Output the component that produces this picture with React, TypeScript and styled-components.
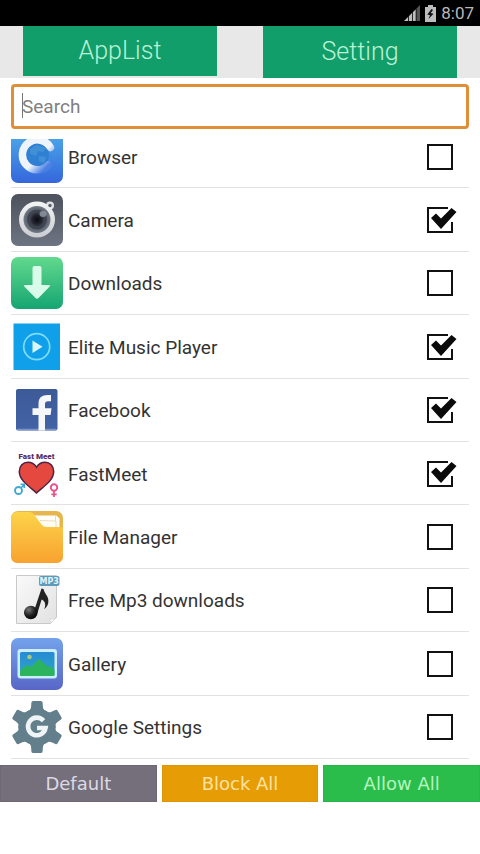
import React, { useState } from "react";
import styled, { createGlobalStyle } from "styled-components";

const GlobalStyle = createGlobalStyle`
  * { box-sizing: border-box; }
  body { margin: 0; background: #fff; font-family: Roboto, "Noto Sans", sans-serif; color: #333; }
  button, input { font: inherit; }
`;

const Screen = styled.div`
  display: flex;
  flex-direction: column;
  min-height: 100vh;
`;

const StatusBar = styled.header`
  display: flex;
  align-items: center;
  justify-content: flex-end;
  gap: 5px;
  height: 26px;
  padding: 0 6px 0 0;
  background: #000;
  color: #b9b9b9;
  font-size: 17px;
`;

const Tabs = styled.nav`
  display: grid;
  grid-template-columns: 1fr 1fr;
  height: 52px;
  background: #e8e8e8;
`;

const Tab = styled.button<{ $selected: boolean }>`
  margin: 0 23px ${(p) => (p.$selected ? 2 : 0)}px;
  padding: 0;
  border: 0;
  background: #129e6b;
  color: #b9f3d6;
  font-size: 25px;
  font-weight: 300;
  line-height: 50px;
`;

const SearchBox = styled.div`
  position: relative;
  margin: 6px 11px 0;
`;

const SearchInput = styled.input`
  display: block;
  width: 100%;
  height: 45px;
  padding: 0 8px;
  border: 3px solid #df8f38;
  border-radius: 4px;
  outline: 0;
  background: #fff;
  font-size: 19px;
  caret-color: transparent;
  &::placeholder { color: #808080; opacity: 1; }
`;

const Caret = styled.span`
  position: absolute;
  left: 11px;
  top: 9px;
  width: 1px;
  height: 25px;
  background: #777;
`;

const ListViewport = styled.main`
  display: grid;
  align-content: end;
  height: 620px;
  margin: 10px 11px 0;
  overflow: hidden;
`;

const AppList = styled.ul`
  display: grid;
  grid-auto-rows: 1fr;
  height: 634px;
  margin: 0;
  padding: 0;
  list-style: none;
`;

const Row = styled.li`
  border-bottom: 1px solid #e2e2e2;
`;

const RowLabel = styled.label`
  display: flex;
  align-items: center;
  gap: 5px;
  height: 100%;
  padding: 1px 12px 0 0;
`;

const AppName = styled.span`
  flex: 1;
  padding-top: 2px;
  font-size: 19px;
  line-height: 24px;
`;

const IconSvg = styled.svg`
  flex: none;
  display: block;
  width: 52px;
  height: 52px;
`;

const CheckCell = styled.span`
  display: grid;
  width: 30px;
  height: 26px;
  > * { grid-area: 1 / 1; }
`;

const CheckInput = styled.input`
  appearance: none;
  width: 26px;
  height: 26px;
  margin: 0;
  border: 2px solid #111;
  background: #fff;
  &:checked { border-color: transparent; }
`;

const CheckMark = styled.svg`
  display: block;
  width: 30px;
  height: 26px;
  pointer-events: none;
`;

const Actions = styled.footer`
  display: grid;
  grid-template-columns: repeat(3, 1fr);
  gap: 5px;
  margin-top: 6px;
`;

const ActionButton = styled.button<{ $bg: string; $edge: string; $ink: string }>`
  height: 37px;
  padding: 0;
  border: 1px solid ${(p) => p.$edge};
  background: ${(p) => p.$bg};
  color: ${(p) => p.$ink};
  font-family: "DejaVu Sans", sans-serif;
  font-size: 18px;
  font-weight: 400;
`;

const BrowserIcon = () => (
  <IconSvg viewBox="0 0 52 52" aria-hidden="true">
    <defs>
      <linearGradient id="browserBg" x1="0" y1="0" x2="0" y2="1">
        <stop offset="0.1" stopColor="#4aa5e8" />
        <stop offset="1" stopColor="#3566dc" />
      </linearGradient>
      <linearGradient id="browserC" gradientUnits="userSpaceOnUse" x1="22" y1="26" x2="37" y2="41">
        <stop offset="0.2" stopColor="#eef4fc" />
        <stop offset="0.8" stopColor="#4a7fe4" />
      </linearGradient>
    </defs>
    <rect width="52" height="52" rx="7" fill="url(#browserBg)" />
    <circle cx="26" cy="24" r="12" fill="#2f80d3" />
    <path d="M19 18l7-4 9 3-3 4-5-1-2 5-6-2zM28 25l7 1-2 6-5-2z" fill="#4190d6" />
    <path d="M39.500 16.500A15 15 0 1 0 37.500 34" fill="none" stroke="url(#browserC)" strokeWidth="7.500" strokeLinecap="round" />
  </IconSvg>
);

const CameraIcon = () => (
  <IconSvg viewBox="0 0 52 52" aria-hidden="true">
    <defs>
      <linearGradient id="cameraBg" x1="0" y1="0" x2="0" y2="1">
        <stop offset="0" stopColor="#4d525d" />
        <stop offset="1" stopColor="#6d7582" />
      </linearGradient>
      <linearGradient id="cameraRing" x1="0" y1="0" x2="0" y2="1">
        <stop offset="0" stopColor="#f4f5f6" />
        <stop offset="1" stopColor="#c9ccd1" />
      </linearGradient>
      <radialGradient id="cameraLens">
        <stop offset="0" stopColor="#080a10" />
        <stop offset="0.35" stopColor="#22252f" />
        <stop offset="0.7" stopColor="#555b67" />
        <stop offset="1" stopColor="#747c87" />
      </radialGradient>
    </defs>
    <rect width="52" height="52" rx="7" fill="url(#cameraBg)" />
    <circle cx="39" cy="11.500" r="4" fill="#dfe2e5" />
    <circle cx="26" cy="25.500" r="18" fill="url(#cameraRing)" />
    <circle cx="39" cy="11.500" r="1.700" fill="#59606c" />
    <circle cx="26" cy="25.500" r="13.500" fill="url(#cameraLens)" />
    <circle cx="26" cy="25.500" r="9" fill="none" stroke="#3c424f" strokeWidth="1.500" />
    <ellipse cx="32" cy="20" rx="3.500" ry="3" fill="#929aa4" opacity="0.8" />
  </IconSvg>
);

const DownloadsIcon = () => (
  <IconSvg viewBox="0 0 52 52" aria-hidden="true">
    <defs>
      <linearGradient id="downloadBg" x1="0" y1="0" x2="0" y2="1">
        <stop offset="0" stopColor="#62d98d" />
        <stop offset="1" stopColor="#15a572" />
      </linearGradient>
    </defs>
    <rect width="52" height="52" rx="7" fill="url(#downloadBg)" />
    <path d="M21.500 11q0-2 2-2h5q2 0 2 2v17h7.500q2 0 .7 1.600L27.500 41q-1.500 1.400-3 0L13.300 29.600Q12 28 14 28h7.500z" fill="#d9fbe9" />
  </IconSvg>
);

const MusicIcon = () => (
  <IconSvg viewBox="0 0 52 52" aria-hidden="true">
    <rect x="2.500" y="2.500" width="46.500" height="46.500" fill="#0fa0e9" />
    <circle cx="25.700" cy="25.700" r="13" fill="none" stroke="#7fdcf8" strokeWidth="1.700" />
    <path d="M21.500 19.500v12.500l10-6.200z" fill="#d9f6ff" />
  </IconSvg>
);

const FacebookIcon = () => (
  <IconSvg viewBox="0 0 52 52" aria-hidden="true">
    <defs>
      <linearGradient id="fbBg" x1="0" y1="0" x2="0" y2="1">
        <stop offset="0" stopColor="#3d5a98" />
        <stop offset="1" stopColor="#4363a6" />
      </linearGradient>
    </defs>
    <rect x="5" y="5" width="41.500" height="41.500" rx="2" fill="url(#fbBg)" />
    <path d="M6 45.500h39.500" stroke="#7d95c6" strokeWidth="1.500" />
    <path d="M27.500 46.500V31h-6v-6.800h6v-4.500c0-6 3.500-8.700 9-8.700h3.500v6.200h-2.800c-2.400 0-3.200 1-3.200 3.200v3.800h6.500l-.9 6.800H34v15.500z" fill="#f5f7fb" />
  </IconSvg>
);

const FastMeetIcon = () => (
  <IconSvg viewBox="0 0 52 52" aria-hidden="true">
    <text x="25.500" y="11" textAnchor="middle" fontFamily="Roboto, sans-serif" fontWeight="900" fontSize="8" fill="#5b2c68">Fast Meet</text>
    <path d="M25.500 45C21 40 8.300 33.500 8.300 23.500c0-5.300 3.700-9.300 8.600-9.300 3.700 0 6.800 2 8.600 5 1.800-3 4.900-5 8.600-5 4.900 0 8.600 4 8.600 9.300C42.700 33.500 30 40 25.500 45z" fill="#e5483f" stroke="#4e2243" strokeWidth="1.500" />
    <circle cx="7.500" cy="42.500" r="3.500" fill="none" stroke="#42a9d4" strokeWidth="1.900" />
    <path d="M10 40l3-3.500M9.500 36.300h3.800v3.800" fill="none" stroke="#42a9d4" strokeWidth="1.600" />
    <circle cx="43" cy="39.500" r="3.200" fill="none" stroke="#e6558b" strokeWidth="1.900" />
    <path d="M43 43v6M40.300 46.300h5.400" stroke="#e6558b" strokeWidth="1.800" />
  </IconSvg>
);

const FolderIcon = () => (
  <IconSvg viewBox="0 0 52 52" aria-hidden="true">
    <defs>
      <linearGradient id="folderBg" x1="0" y1="0" x2="0" y2="1">
        <stop offset="0" stopColor="#fcd44a" />
        <stop offset="1" stopColor="#f8a22f" />
      </linearGradient>
    </defs>
    <rect width="52" height="52" rx="7" fill="#e6b64c" />
    <path d="M22 4.500h23.500l3 3V20H25z" fill="#fffdf5" />
    <path d="M44.500 5v5M29 9.500l16 .5v9" fill="none" stroke="#ead9ad" strokeWidth="0.900" />
    <path d="M0 8q0-7 7-7h11.500q3 0 5 3l7 9.500q2 2.500 5 2.500H52v29q0 7-7 7H7q-7 0-7-7z" fill="url(#folderBg)" />
  </IconSvg>
);

const Mp3Icon = () => (
  <IconSvg viewBox="0 0 52 52" aria-hidden="true">
    <defs>
      <linearGradient id="mp3Page" x1="0" y1="0" x2="1" y2="1">
        <stop offset="0" stopColor="#fafafa" />
        <stop offset="1" stopColor="#e1e1e1" />
      </linearGradient>
      <radialGradient id="mp3Note" cx="0.350" cy="0.300" r="0.700">
        <stop offset="0" stopColor="#777" />
        <stop offset="0.6" stopColor="#222" />
        <stop offset="1" stopColor="#080808" />
      </radialGradient>
    </defs>
    <path d="M5.500 1.500h40V43l-6 6.500h-34z" fill="url(#mp3Page)" stroke="#c9c9c9" />
    <path d="M45.500 43q-2 2.500-6 2 .8 2.500 0 4.500z" fill="#fff" stroke="#d0d0d0" strokeWidth="0.600" />
    <path d="M23 37L30.500 14.500l2 .5c.8 4.500 5.200 7 4.900 12.500-.1 3.400-2 6-4.200 7.800 1.800-4.400 1.400-8-2.600-9.800L26.500 39z" fill="#222" />
    <circle cx="19.800" cy="38.500" r="6.800" fill="url(#mp3Note)" />
    <rect x="28" y="2" width="20.500" height="10" rx="2" fill="#5d9abb" />
    <text x="38.200" y="10" textAnchor="middle" fontFamily="DejaVu Sans, sans-serif" fontWeight="700" fontSize="8" fill="#e2f4fb">MP3</text>
  </IconSvg>
);

const GalleryIcon = () => (
  <IconSvg viewBox="0 0 52 52" aria-hidden="true">
    <defs>
      <linearGradient id="galleryBg" x1="0" y1="0" x2="0" y2="1">
        <stop offset="0" stopColor="#74a2ea" />
        <stop offset="1" stopColor="#5866c7" />
      </linearGradient>
      <linearGradient id="gallerySky" x1="0" y1="0" x2="0" y2="1">
        <stop offset="0" stopColor="#278bd4" />
        <stop offset="1" stopColor="#2da6c5" />
      </linearGradient>
    </defs>
    <rect width="52" height="52" rx="7" fill="url(#galleryBg)" />
    <rect x="6.500" y="11" width="39.500" height="29.500" rx="3" fill="#c9effc" />
    <rect x="9" y="14" width="34.500" height="24" rx="1.500" fill="url(#gallerySky)" />
    <circle cx="18.500" cy="19" r="2.300" fill="#a9c77d" />
    <path d="M9 32.500l7-5.500 4 2 8-8 9 8 2-1 4.500 4v4.500q0 1.500-1.500 1.500H10.500Q9 38 9 36.500z" fill="#2bb35e" />
  </IconSvg>
);

const GearIcon = () => (
  <IconSvg viewBox="0 0 52 52" aria-hidden="true">
    <g fill="#627f8b">
      <circle cx="26" cy="26" r="18.500" />
      {[0, 60, 120, 180, 240, 300].map((a) => (
        <path key={a} transform={`rotate(${a} 26 26)`} d="M15.500 10.500q4.300-.8 4.600-4.800l.3-4.200q.2-1.500 1.800-1.500h7.600q1.600 0 1.800 1.500l.3 4.200q.3 4 4.600 4.800L30 20h-8z" />
      ))}
    </g>
    <path d="M32.500 19.700A8.800 8.800 0 1 0 34.500 27H26" fill="none" stroke="#eff5f6" strokeWidth="4.600" />
  </IconSvg>
);

const apps = [
  { name: "Browser", Icon: BrowserIcon, blocked: false },
  { name: "Camera", Icon: CameraIcon, blocked: true },
  { name: "Downloads", Icon: DownloadsIcon, blocked: false },
  { name: "Elite Music Player", Icon: MusicIcon, blocked: true },
  { name: "Facebook", Icon: FacebookIcon, blocked: true },
  { name: "FastMeet", Icon: FastMeetIcon, blocked: true },
  { name: "File Manager", Icon: FolderIcon, blocked: false },
  { name: "Free Mp3 downloads", Icon: Mp3Icon, blocked: false },
  { name: "Gallery", Icon: GalleryIcon, blocked: false },
  { name: "Google Settings", Icon: GearIcon, blocked: false },
];

export default function App() {
  const initial = apps.map((a) => a.blocked);
  const [checked, setChecked] = useState<boolean[]>(initial);
  const [tab, setTab] = useState("AppList");
  const toggle = (i: number) => setChecked((c) => c.map((v, j) => (j === i ? !v : v)));

  return (
    <Screen>
      <GlobalStyle />
      <StatusBar>
        <svg width="16" height="16" viewBox="0 0 16 16" aria-hidden="true">
          <path d="M0 16L4 12v4zM4.800 11.200L8 8v8H4.800zM8.800 7.200L11.700 4.300V16H8.800z" fill="#bdbdbd" />
          <path d="M12.500 3.500L16 0v16h-3.500z" fill="#555" />
        </svg>
        <svg width="11" height="17" viewBox="0 0 11 17" aria-hidden="true">
          <path d="M3 0h5v2h3v15H0V2h3z" fill="#bdbdbd" />
          <path d="M6.500 4L2.300 9.500l2.700.8L3.500 14l5-5.200-2.800-.9L8 5z" fill="#111" />
        </svg>
        <time>8:07</time>
      </StatusBar>
      <Tabs>
        {["AppList", "Setting"].map((t) => (
          <Tab key={t} type="button" $selected={tab === t} onClick={() => setTab(t)}>{t}</Tab>
        ))}
      </Tabs>
      <SearchBox>
        <SearchInput type="text" placeholder="Search" aria-label="Search" />
        <Caret />
      </SearchBox>
      <ListViewport>
        <AppList>
          {apps.map(({ name, Icon }, i) => (
            <Row key={name}>
              <RowLabel>
                <Icon />
                <AppName>{name}</AppName>
                <CheckCell>
                  <CheckInput type="checkbox" checked={checked[i]} onChange={() => toggle(i)} />
                  {checked[i] && (
                    <CheckMark viewBox="0 0 30 26" aria-hidden="true">
                      <path d="M21 1H1v24h24V15" fill="none" stroke="#111" strokeWidth="2" />
                      <path d="M4 11L9 6.500l5 5L24.500 1l5 4-15.500 17z" fill="#0a0a0a" />
                    </CheckMark>
                  )}
                </CheckCell>
              </RowLabel>
            </Row>
          ))}
        </AppList>
      </ListViewport>
      <Actions>
        <ActionButton type="button" $bg="#756f7c" $edge="#6e6875" $ink="#dcd9e2" onClick={() => setChecked(initial)}>Default</ActionButton>
        <ActionButton type="button" $bg="#e59c05" $edge="#dd9708" $ink="#ffe2a0" onClick={() => setChecked(apps.map(() => true))}>Block All</ActionButton>
        <ActionButton type="button" $bg="#2abd4b" $edge="#29b449" $ink="#b4f5bf" onClick={() => setChecked(apps.map(() => false))}>Allow All</ActionButton>
      </Actions>
    </Screen>
  );
}
